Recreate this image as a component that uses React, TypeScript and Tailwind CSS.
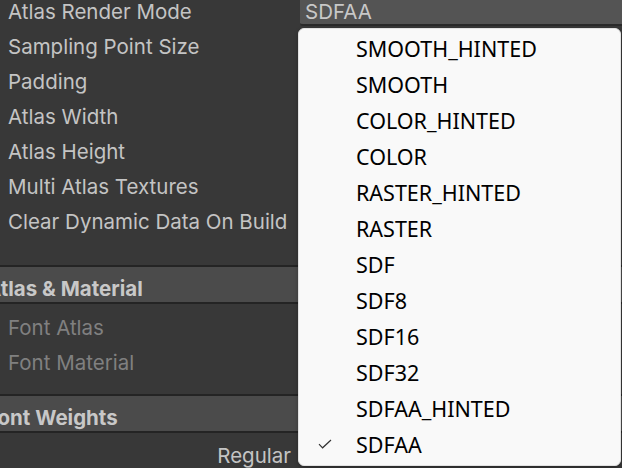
import React from "react"

const settings = [
  "Atlas Render Mode",
  "Sampling Point Size",
  "Padding",
  "Atlas Width",
  "Atlas Height",
  "Multi Atlas Textures",
  "Clear Dynamic Data On Build",
]

const modes = [
  "SMOOTH_HINTED",
  "SMOOTH",
  "COLOR_HINTED",
  "COLOR",
  "RASTER_HINTED",
  "RASTER",
  "SDF",
  "SDF8",
  "SDF16",
  "SDF32",
  "SDFAA_HINTED",
  "SDFAA",
]

const selected = "SDFAA"

function SectionHeader({ title }: { title: string }) {
  return (
    <div className="border-y-2 border-[#242424] bg-[#4b4b4b] h-[39px] flex items-center pt-[9px]">
      <span className="ml-[-14px] text-[20.5px] font-bold text-[#c8c8c8] whitespace-nowrap">{title}</span>
    </div>
  )
}

export default function App() {
  return (
    <div className="relative w-[622px] h-[468px] overflow-hidden bg-[#383838] font-['Inter',sans-serif]">
      <div className="flex flex-col mt-[-5px]">
        {settings.map((label, i) => (
          <div key={label} className="flex h-[35px] items-center">
            <div className="w-[300px] pl-2 text-[20.5px] text-[#c4c4c4] whitespace-nowrap">{label}</div>
            {i === 0 && (
              <div className="mt-[5px] flex-1 self-start h-[26px] border-b-2 border-[#2a2a2a] rounded-bl-[3px] bg-[#545454] pl-[5px] text-[20.5px] leading-[24px] text-[#c8c8c8]">
                {selected}
              </div>
            )}
          </div>
        ))}
      </div>

      <div className="mt-[25px]">
        <SectionHeader title="Atlas & Material" />
      </div>
      <div className="flex flex-col pt-[7px]">
        {["Font Atlas", "Font Material"].map((label) => (
          <div key={label} className="flex h-[35px] items-center pl-2 text-[20.5px] text-[#808080]">
            {label}
          </div>
        ))}
      </div>
      <div className="mt-[13px]">
        <SectionHeader title="Font Weights" />
      </div>
      <div className="flex h-[35px] items-center pt-[12px]">
        <div className="w-[291px] text-right text-[20.5px] text-[#c4c4c4]">Regular</div>
      </div>

      <div className="absolute left-[298px] top-[28px] w-[323px] h-[438px] rounded-[6px] border border-[#e2e2e2] bg-[#f9f9f9] shadow-[0_2px_4px_rgba(0,0,0,0.25)] pt-[2px] font-['Noto_Sans',sans-serif]">
        {modes.map((m) => (
          <div key={m} className="relative flex h-[36px] items-center pl-[57px] text-[21.5px] text-black">
            {m === selected && (
              <svg className="absolute left-[19px] top-[12px]" width="14" height="10" viewBox="0 0 14 10" fill="none">
                <path d="M1 5.2L4.6 8.8L13 1" stroke="#333" strokeWidth="1.2" />
              </svg>
            )}
            {m}
          </div>
        ))}
      </div>
    </div>
  )
}
